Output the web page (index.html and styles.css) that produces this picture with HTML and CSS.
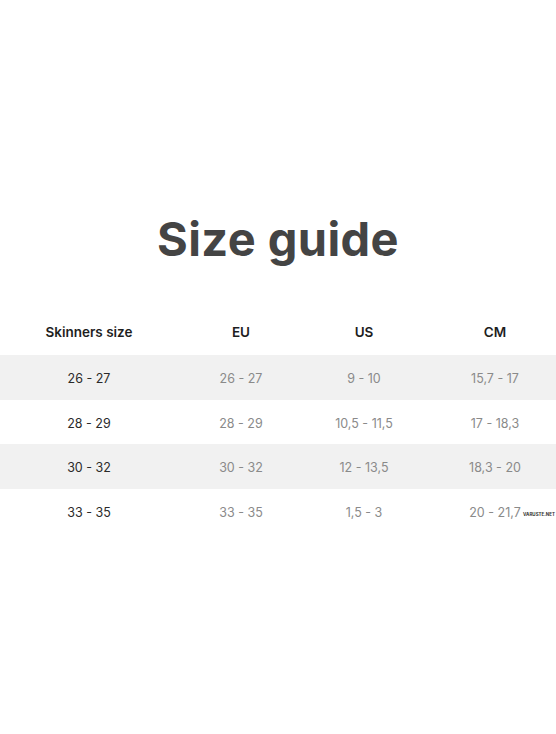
FILE: index.html
```html
<!DOCTYPE html>
<html>
<head>
<meta charset="utf-8">
<link rel="stylesheet" href="styles.css">
</head>
<body>
<div class="page">
  <h1 class="title">Size guide</h1>
  <div class="table">
    <div class="row head">
      <div class="cell">Skinners size</div>
      <div class="cell">EU</div>
      <div class="cell">US</div>
      <div class="cell last">CM</div>
    </div>
    <div class="row band">
      <div class="cell main">26 - 27</div>
      <div class="cell">26 - 27</div>
      <div class="cell">9 - 10</div>
      <div class="cell last">15,7 - 17</div>
    </div>
    <div class="row">
      <div class="cell main">28 - 29</div>
      <div class="cell">28 - 29</div>
      <div class="cell">10,5 - 11,5</div>
      <div class="cell last">17 - 18,3</div>
    </div>
    <div class="row band">
      <div class="cell main">30 - 32</div>
      <div class="cell">30 - 32</div>
      <div class="cell">12 - 13,5</div>
      <div class="cell last">18,3 - 20</div>
    </div>
    <div class="row">
      <div class="cell main">33 - 35</div>
      <div class="cell">33 - 35</div>
      <div class="cell">1,5 - 3</div>
      <div class="cell last">20 - 21,7</div>
      <span class="mark">VARUSTE.NET</span>
    </div>
  </div>
</div>
</body>
</html>
```
FILE: styles.css
```css
html, body {
  margin: 0;
  padding: 0;
  background: #fff;
}
.page {
  width: 556px;
  height: 734px;
  font-family: Inter, "Open Sans", sans-serif;
  padding-top: 209px;
  box-sizing: border-box;
}
.title {
  margin: 0;
  text-align: center;
  font-family: Inter, sans-serif;
  font-weight: 700;
  font-size: 47px;
  line-height: 60px;
  color: #444;
  letter-spacing: 0.4px;
}
.table {
  margin-top: 54px;
}
.row {
  display: grid;
  grid-template-columns: 178px 126px 120px 1fr;
  height: 44.5px;
  align-items: center;
  position: relative;
}
.row .cell {
  padding-top: 3px;
}
.row.head {
  height: 32px;
  align-items: start;
}
.row.head .cell {
  padding-top: 1px;
}
.row.band {
  background: #f1f1f1;
}
.cell {
  text-align: center;
  font-size: 12.5px;
  color: #8a8a8a;
}
.row .cell.last {
  padding-left: 10px;
}
.cell.main {
  color: #2a2a2a;
}
.head .cell {
  font-weight: 600;
  font-size: 13.5px;
  color: #1e1e1e;
}
.mark {
  position: absolute;
  right: 1px;
  top: 23px;
  font-size: 4.5px;
  font-weight: 700;
  color: #333;
  letter-spacing: 0;
}
```
